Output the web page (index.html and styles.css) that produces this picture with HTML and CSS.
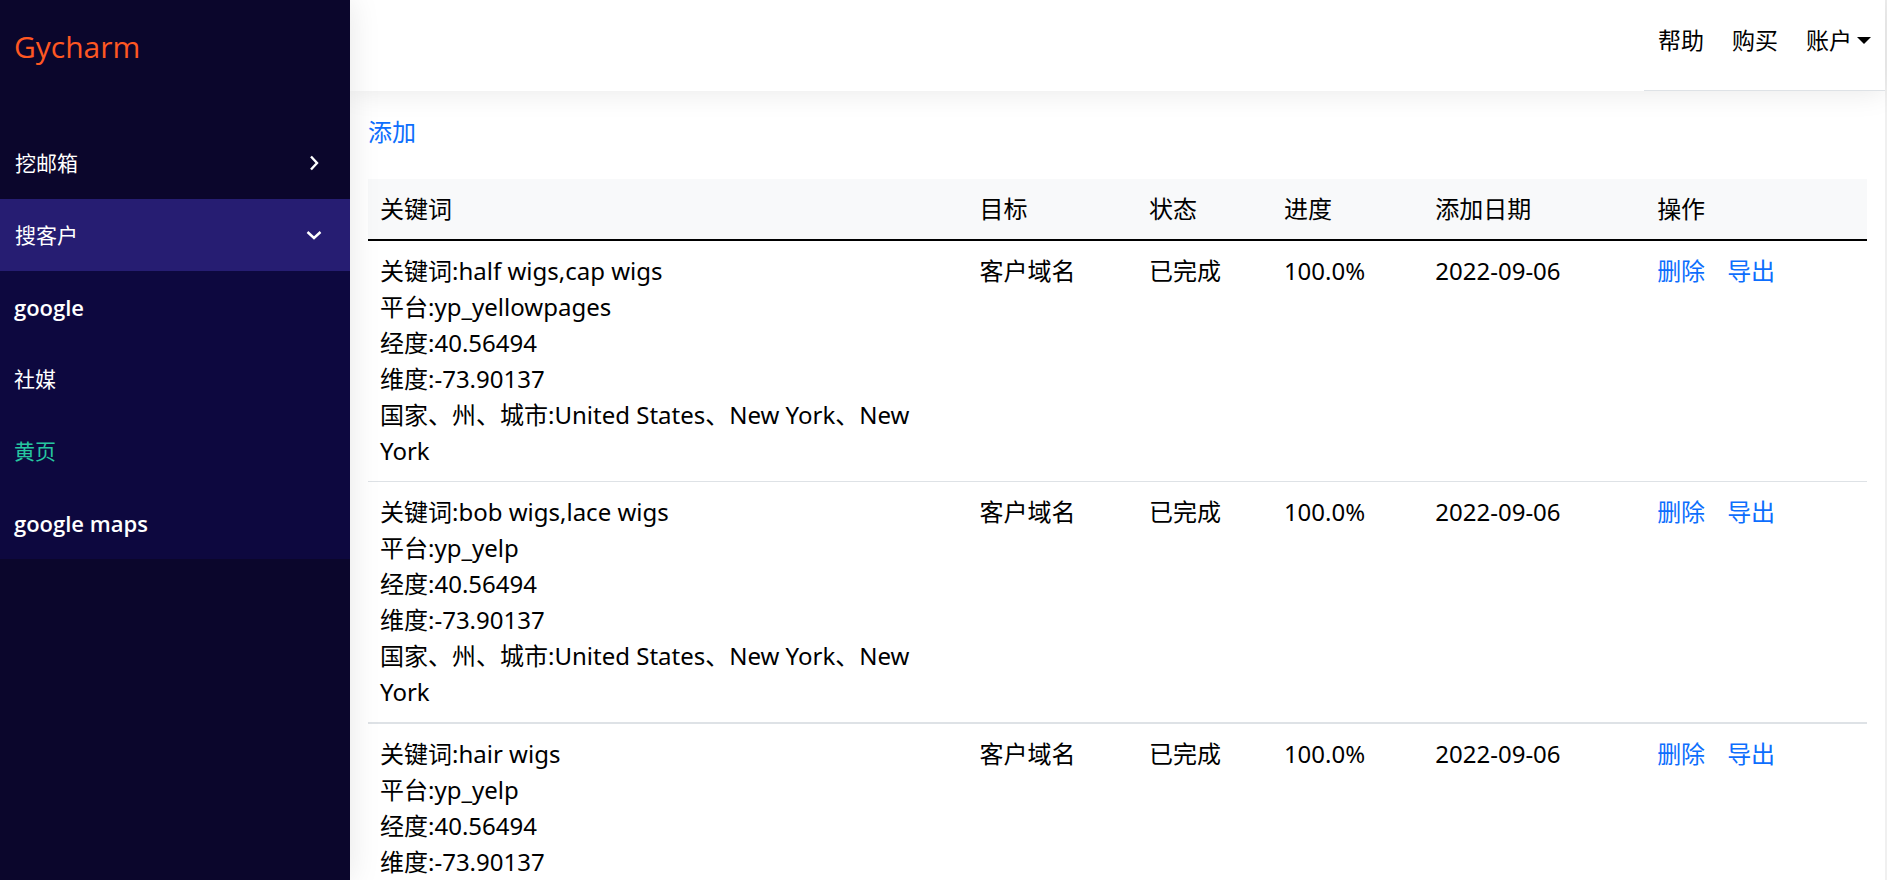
FILE: index.html
```html
<!DOCTYPE html>
<html lang="zh-CN">
<head>
    <meta charset="UTF-8">
    <meta name="viewport" content="width=device-width, initial-scale=1.0">
    <title>Gycharm</title>
    <link rel="stylesheet" href="styles.css">
</head>
<body>
    <div class="wrapper">
        <aside class="sidebar">
            <a href="#" class="logo">Gycharm</a>
            <nav class="menu">
                <a href="#" class="menu-item">
                    <span>挖邮箱</span>
                    <svg class="arrow" viewBox="0 0 18 18"><path d="M6 2.5 L12 9 L6 15.5"/></svg>
                </a>
                <a href="#" class="menu-item active">
                    <span>搜客户</span>
                    <svg class="arrow" viewBox="0 0 18 18"><path d="M2.5 6 L9 12 L15.5 6"/></svg>
                </a>
                <div class="submenu">
                    <a href="#" class="latin">google</a>
                    <a href="#">社媒</a>
                    <a href="#" class="current">黄页</a>
                    <a href="#" class="latin">google maps</a>
                </div>
            </nav>
        </aside>

        <div class="page">
            <header class="topbar">
                <nav class="top-links">
                    <a href="#">帮助</a>
                    <a href="#">购买</a>
                    <a href="#" class="dropdown">账户</a>
                </nav>
            </header>

            <main class="content">
                <a href="#" class="add-link">添加</a>

                <table class="task-table">
                    <colgroup>
                        <col class="col-keyword">
                        <col class="col-target">
                        <col class="col-status">
                        <col class="col-progress">
                        <col class="col-date">
                        <col class="col-action">
                    </colgroup>
                    <thead>
                        <tr>
                            <th>关键词</th>
                            <th>目标</th>
                            <th>状态</th>
                            <th>进度</th>
                            <th>添加日期</th>
                            <th>操作</th>
                        </tr>
                    </thead>
                    <tbody>
                        <tr>
                            <td>关键词:half wigs,cap wigs<br>平台:yp_yellowpages<br>经度:40.56494<br>维度:-73.90137<br>国家、州、城市:United States、New York、New York</td>
                            <td>客户域名</td>
                            <td>已完成</td>
                            <td>100.0%</td>
                            <td>2022-09-06</td>
                            <td><div class="actions"><a href="#">删除</a><a href="#">导出</a></div></td>
                        </tr>
                        <tr>
                            <td>关键词:bob wigs,lace wigs<br>平台:yp_yelp<br>经度:40.56494<br>维度:-73.90137<br>国家、州、城市:United States、New York、New York</td>
                            <td>客户域名</td>
                            <td>已完成</td>
                            <td>100.0%</td>
                            <td>2022-09-06</td>
                            <td><div class="actions"><a href="#">删除</a><a href="#">导出</a></div></td>
                        </tr>
                        <tr>
                            <td>关键词:hair wigs<br>平台:yp_yelp<br>经度:40.56494<br>维度:-73.90137</td>
                            <td>客户域名</td>
                            <td>已完成</td>
                            <td>100.0%</td>
                            <td>2022-09-06</td>
                            <td><div class="actions"><a href="#">删除</a><a href="#">导出</a></div></td>
                        </tr>
                    </tbody>
                </table>
            </main>
        </div>
    </div>
</body>
</html>
```
FILE: styles.css
```css
* {
    margin: 0;
    padding: 0;
    box-sizing: border-box;
}

body {
    font-family: "Noto Sans", "Noto Sans CJK SC", sans-serif;
    font-size: 24px;
    line-height: 36px;
    color: #000;
    background-color: #fff;
    overflow: hidden;
}

a {
    color: #0d6efd;
    text-decoration: none;
}

.wrapper {
    display: flex;
    height: 100vh;
}

/* sidebar */
.sidebar {
    position: relative;
    z-index: 2;
    flex: 0 0 350px;
    background-color: #0b062c;
    box-shadow: 0 0 30px rgba(0, 0, 0, 0.1);
}

.logo {
    display: block;
    padding: 23px 14px 56px;
    font-family: "Open Sans", sans-serif;
    font-size: 30px;
    line-height: 48px;
    color: #ff5722;
}

.menu {
    font-size: 21px;
}

.menu a {
    display: flex;
    align-items: center;
    height: 72px;
    padding: 0 14px;
    color: #fff;
}

.menu .menu-item {
    justify-content: space-between;
    padding: 0 27px 0 15px;
}

.menu .active {
    background-color: #261d72;
}

.arrow {
    width: 18px;
    height: 18px;
    fill: none;
    stroke: #fff;
    stroke-width: 2.4;
}

.submenu {
    background-color: #0d083f;
}

.submenu .latin {
    font-family: "Open Sans", sans-serif;
    font-size: 22px;
    font-weight: 600;
}

.menu .current {
    color: #26c6a0;
}

/* right side */
.page {
    flex: 1;
    min-width: 0;
    border-right: 2px solid #f0f0f0;
}

.topbar {
    display: flex;
    justify-content: flex-end;
    height: 91px;
    box-shadow: 0 0 30px rgba(0, 0, 0, 0.1);
}

.top-links {
    display: flex;
    gap: 28px;
    padding: 22px 14px 0 14px;
    border-bottom: 1px solid #dee2e6;
    font-size: 23px;
}

.top-links a {
    color: #000;
}

.dropdown::after {
    content: "";
    display: inline-block;
    margin-left: 5px;
    vertical-align: 5px;
    border-top: 7px solid #000;
    border-left: 7px solid transparent;
    border-right: 7px solid transparent;
}

.content {
    padding: 23px 18px 0;
}

.add-link {
    display: block;
    margin-bottom: 29px;
}

/* table */
.task-table {
    width: 100%;
    table-layout: fixed;
    border-collapse: separate;
    border-spacing: 0;
}

.col-keyword { width: 40%; }
.col-target { width: 11.3%; }
.col-status { width: 9%; }
.col-progress { width: 10.1%; }
.col-date { width: 14.8%; }
.col-action { width: 14.8%; }

.task-table th,
.task-table td {
    padding: 12px;
    text-align: left;
    vertical-align: top;
    border-bottom: 1px solid #dee2e6;
}

.task-table th {
    font-weight: 400;
    background-color: #f8f9fa;
    border-bottom: 2px solid #000;
}

.task-table tr:nth-child(even) td {
    border-bottom-width: 2px;
}

.actions {
    display: flex;
    gap: 22px;
}
```
